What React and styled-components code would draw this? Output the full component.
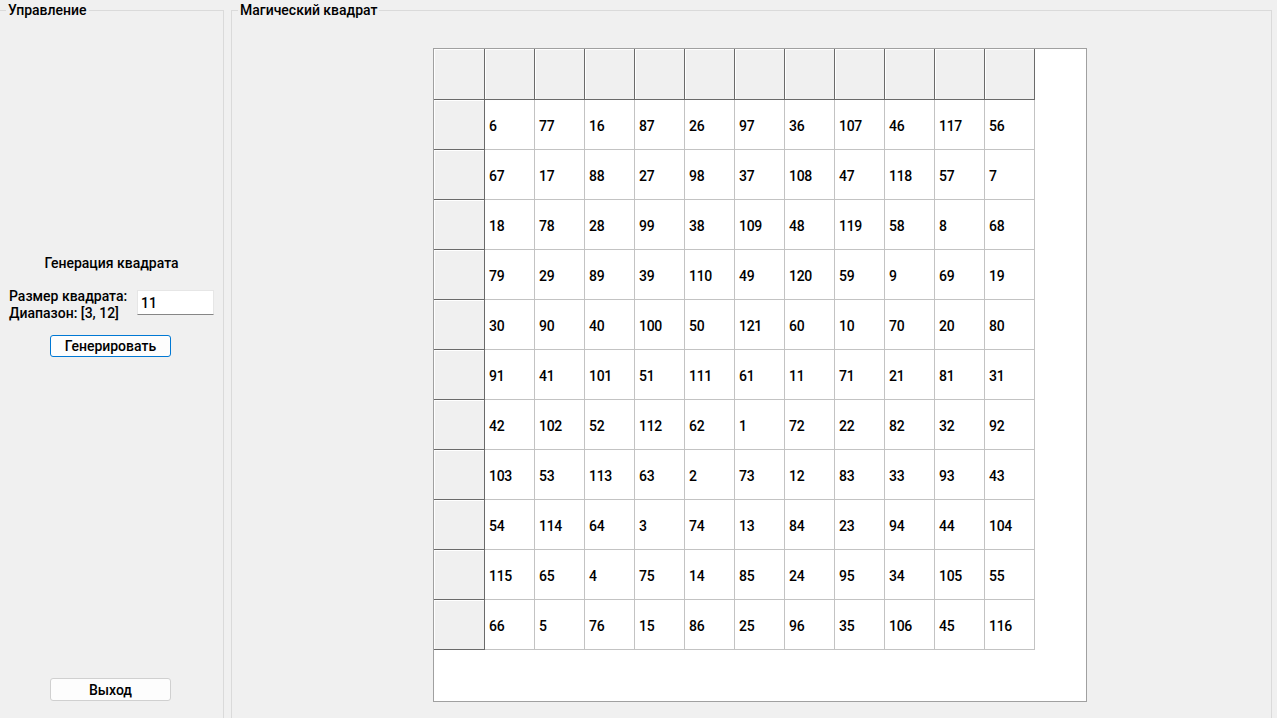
import React from 'react';
import styled, { createGlobalStyle } from 'styled-components';

const GlobalStyle = createGlobalStyle`
  html, body {
    margin: 0;
    padding: 0;
    background: #f0f0f0;
    overflow: hidden;
  }
  body {
    font-family: Roboto, "Liberation Sans", sans-serif;
    font-size: 14px;
    font-weight: 500;
    color: #000;
  }
`;

const Window = styled.div`
  display: flex;
  gap: 7px;
  height: 718px;
  padding-right: 5px;
  overflow: hidden;
  box-sizing: border-box;
`;

const GroupBox = styled.fieldset`
  margin: 0;
  padding: 0;
  height: 740px;
  box-sizing: border-box;
  border: 1px solid #dadada;
  border-left: ${(p) => (p.$noLeft ? 'none' : '1px solid #dadada')};
  width: ${(p) => p.$width || 'auto'};
  flex: ${(p) => (p.$width ? 'none' : '1')};
  min-width: 0;
`;

const Legend = styled.legend`
  margin-left: 6px;
  padding: 0 2px;
  line-height: 20px;
  font-size: 14px;
`;

const ControlBody = styled.div`
  display: flex;
  flex-direction: column;
  height: 681px;
`;

const SectionTitle = styled.div`
  margin-top: 235px;
  text-align: center;
  line-height: 17px;
`;

const FormRow = styled.div`
  display: flex;
  align-items: flex-start;
  gap: 7px;
  margin-top: 16px;
  padding-left: 9px;
`;

const Label = styled.div`
  width: 121px;
  line-height: 17px;
  white-space: nowrap;
`;

const SizeInput = styled.input`
  width: 77px;
  height: 25px;
  margin-top: 2px;
  box-sizing: border-box;
  border: 1px solid #e6e6e6;
  border-bottom: 1px solid #868686;
  background: #fff;
  font-family: inherit;
  font-weight: 500;
  font-size: 14px;
  padding: 0 3px;
  outline: none;
`;

const Button = styled.button`
  width: 121px;
  height: ${(p) => (p.$primary ? '22px' : '23px')};
  margin-left: 50px;
  box-sizing: border-box;
  background: #fdfdfd;
  border: 1px solid ${(p) => (p.$primary ? '#0078d4' : '#d0d0d0')};
  border-radius: 3px;
  font-family: inherit;
  font-weight: 500;
  font-size: 14px;
  color: #000;
  padding: 0;
  margin-top: ${(p) => p.$top || '0'};
`;

const SquareBody = styled.div`
  padding: 28px 0 0 201px;
`;

const TableFrame = styled.div`
  width: 654px;
  height: 654px;
  box-sizing: border-box;
  border: 1px solid #a0a0a0;
  background: #fff;
`;

const Grid = styled.div`
  display: grid;
  grid-template-columns: 51px repeat(11, 50px);
  grid-template-rows: 51px repeat(11, 50px);
`;

const HeaderCell = styled.div`
  background: #f0f0f0;
  border-right: 1px solid #6a6a6a;
  border-bottom: 1px solid #6a6a6a;
  box-shadow: inset 1px 1px 0 #fff;
  box-sizing: border-box;
`;

const Cell = styled.div`
  display: flex;
  align-items: center;
  padding: 2px 0 0 4px;
  border-right: 1px solid #c3c3c3;
  border-bottom: 1px solid #c3c3c3;
  box-sizing: border-box;
  font-size: 14px;
  letter-spacing: -0.3px;
`;

const square = [
  [6, 77, 16, 87, 26, 97, 36, 107, 46, 117, 56],
  [67, 17, 88, 27, 98, 37, 108, 47, 118, 57, 7],
  [18, 78, 28, 99, 38, 109, 48, 119, 58, 8, 68],
  [79, 29, 89, 39, 110, 49, 120, 59, 9, 69, 19],
  [30, 90, 40, 100, 50, 121, 60, 10, 70, 20, 80],
  [91, 41, 101, 51, 111, 61, 11, 71, 21, 81, 31],
  [42, 102, 52, 112, 62, 1, 72, 22, 82, 32, 92],
  [103, 53, 113, 63, 2, 73, 12, 83, 33, 93, 43],
  [54, 114, 64, 3, 74, 13, 84, 23, 94, 44, 104],
  [115, 65, 4, 75, 14, 85, 24, 95, 34, 105, 55],
  [66, 5, 76, 15, 86, 25, 96, 35, 106, 45, 116],
];

const App = () => {
  return (
    <>
      <GlobalStyle />
      <Window>
        <GroupBox $width="224px" $noLeft>
          <Legend>Управление</Legend>
          <ControlBody>
            <SectionTitle>Генерация квадрата</SectionTitle>
            <FormRow>
              <Label>
                Размер квадрата:
                <br />
                Диапазон: [3, 12]
              </Label>
              <SizeInput defaultValue="11" />
            </FormRow>
            <Button $primary $top="13px">Генерировать</Button>
            <Button $top="auto">Выход</Button>
          </ControlBody>
        </GroupBox>
        <GroupBox>
          <Legend>Магический квадрат</Legend>
          <SquareBody>
            <TableFrame>
              <Grid>
                <HeaderCell />
                {square[0].map((_, i) => (
                  <HeaderCell key={`h${i}`} />
                ))}
                {square.map((row, r) => (
                  <React.Fragment key={r}>
                    <HeaderCell />
                    {row.map((v, c) => (
                      <Cell key={c}>{v}</Cell>
                    ))}
                  </React.Fragment>
                ))}
              </Grid>
            </TableFrame>
          </SquareBody>
        </GroupBox>
      </Window>
    </>
  );
};

export default App;
